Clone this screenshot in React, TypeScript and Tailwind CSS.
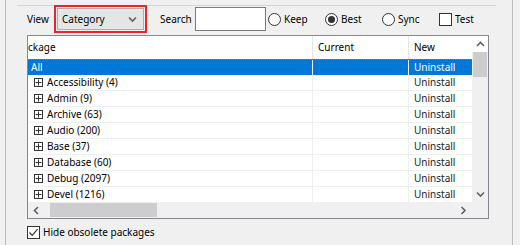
import React from "react";

const rows = [
  "Accessibility (4)",
  "Admin (9)",
  "Archive (63)",
  "Audio (200)",
  "Base (37)",
  "Database (60)",
  "Debug (2097)",
  "Devel (1216)",
];

function Chevron({ dir }: { dir: "up" | "down" | "left" | "right" }) {
  const d = {
    up: "M1 5 L4.5 1.5 L8 5",
    down: "M1 1.5 L4.5 5 L8 1.5",
    left: "M5 1 L1.5 4.5 L5 8",
    right: "M1.5 1 L5 4.5 L1.5 8",
  }[dir];
  const w = dir === "up" || dir === "down" ? 9 : 7;
  const h = dir === "up" || dir === "down" ? 7 : 9;
  return (
    <svg width={w} height={h} viewBox={`0 0 ${w} ${h}`}>
      <path d={d} fill="none" stroke="#606060" strokeWidth="1.6" />
    </svg>
  );
}

function Radio({ label, on }: { label: string; on?: boolean }) {
  return (
    <div className="flex w-[57px] items-center gap-[3px]">
      <span className="flex h-[13px] w-[13px] items-center justify-center rounded-full border border-[#333] bg-white">
        {on && <span className="h-[7px] w-[7px] rounded-full bg-[#333]" />}
      </span>
      <span>{label}</span>
    </div>
  );
}

function Check({ on }: { on?: boolean }) {
  return (
    <span className="flex h-[13px] w-[13px] items-center justify-center border border-[#333] bg-white">
      {on && (
        <svg width="11" height="11" viewBox="0 0 11 11">
          <path d="M1.5 5.5 L4.2 8.3 L9.6 2.2" fill="none" stroke="#333" strokeWidth="1.2" />
        </svg>
      )}
    </span>
  );
}

export default function App() {
  return (
    <div className="flex h-[245px] w-[520px] overflow-hidden bg-[#f0f0f0] pl-[5px] font-['Segoe_UI','Noto_Sans',sans-serif] text-[10px] text-black">
      <div className="flex h-full w-[508px] flex-col border-x border-[#bdbdbd]">
        <div className="ml-[11px] mr-[16px] mt-[5px] h-px bg-[#d5d5d5]" />

        {/* toolbar */}
        <div className="mt-px flex h-[24px] items-center pl-[21px]">
          <span className="w-[30px]">View</span>
          <div className="relative">
            <div className="flex h-[22px] w-[87px] items-center justify-between border border-[#adadad] bg-[#e5e5e5] pl-[4px] pr-[6px]">
              <span>Category</span>
              <Chevron dir="down" />
            </div>
            <div className="absolute -inset-[3px] border-2 border-[#e8232a]" />
          </div>
          <span className="ml-[16px] w-[35px]">Search</span>
          <div className="h-[24px] w-[71px] border border-[#7a7a7a] bg-white" />
          <div className="ml-[2px] flex items-center">
            <Radio label="Keep" />
            <Radio label="Best" on />
            <Radio label="Sync" />
            <div className="flex items-center gap-[3px]">
              <Check />
              <span>Test</span>
            </div>
          </div>
        </div>

        {/* list view */}
        <div className="ml-[21px] mt-[4px] flex h-[184px] w-[462px] flex-col border border-[#828790] bg-white">
          <div className="flex h-[166px]">
            <div className="w-[444px] overflow-hidden">
              <div className="flex h-[23px] items-center">
                <div className="w-[284px]">ckage</div>
                <div className="flex h-full w-[96px] items-center border-l border-[#e5e5e5] pl-[5px]">Current</div>
                <div className="flex h-full w-[64px] items-center border-l border-[#e5e5e5] pl-[5px]">New</div>
              </div>
              <div className="flex h-[16px] border-t border-dotted border-[#7a7a7a] bg-[#0078d7] text-white">
                <div className="flex w-[284px] items-center pl-[3px]">All</div>
                <div className="w-[96px] border-l border-[#f0f0f0]" />
                <div className="flex w-[64px] items-center border-l border-[#f0f0f0] pl-[5px]">Uninstall</div>
              </div>
              {rows.map((r) => (
                <div key={r} className="flex h-[16px] border-b border-[#f0f0f0]">
                  <div className="flex w-[284px] items-center gap-[4px] pl-[6px]">
                    <span className="flex h-[9px] w-[9px] items-center justify-center border border-[#333]">
                      <svg width="7" height="7" viewBox="0 0 7 7">
                        <path d="M0.5 3.5 H6.5 M3.5 0.5 V6.5" stroke="#333" strokeWidth="1" />
                      </svg>
                    </span>
                    <span>{r}</span>
                  </div>
                  <div className="w-[96px] border-l border-[#f0f0f0]" />
                  <div className="flex w-[64px] items-center border-l border-[#f0f0f0] pl-[5px] text-[#1a1a1a]">Uninstall</div>
                </div>
              ))}
            </div>
            {/* vertical scrollbar */}
            <div className="flex w-[16px] flex-col bg-[#f0f0f0]">
              <div className="flex h-[16px] items-center justify-center bg-white">
                <Chevron dir="up" />
              </div>
              <div className="mx-[1px] h-[25px] bg-[#cdcdcd]" />
              <div className="flex-1" />
              <div className="flex h-[16px] items-center justify-center">
                <Chevron dir="down" />
              </div>
            </div>
          </div>
          {/* horizontal scrollbar */}
          <div className="flex h-[16px]">
            <div className="flex w-[444px] items-center bg-[#f0f0f0]">
              <div className="flex w-[17px] justify-center">
                <Chevron dir="left" />
              </div>
              <div className="ml-[5px] h-[14px] w-[107px] bg-[#cdcdcd]" />
              <div className="flex-1" />
              <div className="flex w-[17px] justify-center">
                <Chevron dir="right" />
              </div>
            </div>
            <div className="w-[16px] bg-[#f0f0f0]" />
          </div>
        </div>

        <div className="ml-[21px] mt-[6px] flex items-center gap-[3px]">
          <Check on />
          <span>Hide obsolete packages</span>
        </div>
      </div>
    </div>
  );
}
